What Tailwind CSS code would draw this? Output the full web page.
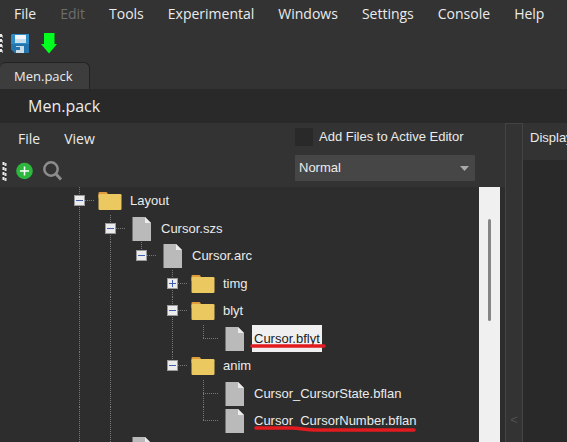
<!DOCTYPE html>
<html lang="en">
<head>
<meta charset="utf-8">
<meta name="viewport" content="width=device-width, initial-scale=1">
<title>Men.pack</title>
<script src="https://cdn.jsdelivr.net/npm/@tailwindcss/browser@4"></script>
</head>
<body class="h-screen overflow-hidden flex flex-col bg-[#333333] text-[#ebebeb] font-['Open_Sans','Noto_Sans',sans-serif] text-[14px] leading-5">

<svg class="hidden" aria-hidden="true">
  <defs>
    <g id="box"><rect x="10" y="8" width="11" height="11" fill="#9a9a9a"/><rect x="11" y="9" width="9" height="9" fill="#ececec"/><path d="M12 13.500h7" stroke="#3f5fae"/></g>
    <path id="up" d="M15.500 0v14" stroke="#777" stroke-dasharray="1 1"/>
    <path id="down" d="M15.500 14v14" stroke="#777" stroke-dasharray="1 1"/>
    <path id="side" d="M15 13.500h16" stroke="#777" stroke-dasharray="1 1"/>
    <symbol id="folder" viewBox="0 0 24 20"><path d="M0.500 3.500V2Q0.500 1 1.500 1H8q1 0 1.500 1l.8 2V7H.5z" fill="#e09c3c"/><rect x="0.500" y="3" width="23" height="16" rx="1.200" fill="#ecc860"/></symbol>
    <symbol id="file" viewBox="0 0 24 26"><path d="M3.500 1H16l6 6v18H3.500z" fill="#bababa"/><path d="M16 1l6 6h-6z" fill="#ececec"/></symbol>
  </defs>
</svg>

<nav class="flex h-7 shrink-0 items-center pl-[2px]">
  <button class="px-3">File</button>
  <button class="px-3 text-[#6d6d6d]" disabled>Edit</button>
  <button class="px-3">Tools</button>
  <button class="px-3">Experimental</button>
  <button class="px-3">Windows</button>
  <button class="px-3">Settings</button>
  <button class="px-3">Console</button>
  <button class="px-3">Help</button>
</nav>

<div class="flex h-[34px] shrink-0 items-start pt-1">
  <svg class="h-6 w-[11px]" viewBox="0 0 11 24"><path d="M1 2v19" stroke="#e8e8e8" stroke-width="2" stroke-dasharray="3 2"/><path d="M2.500 3v18" stroke="#999" stroke-dasharray="3 2"/></svg>
  <button aria-label="Save"><svg class="size-[22px]" viewBox="0 0 22 22"><path d="M1 2h17v19H4l-4-4V3z" fill="#2f8cc6"/><path d="M0 12h18v9H4l-4-4z" fill="#2474ae"/><path d="M4 3h11v4H4z" fill="#f2f6f8"/><path d="M4 7h11v4H4z" fill="#c8dfec"/><path d="M5 14h8v7H5z" fill="#c9dde9"/><path d="M5 15h4v3H5z" fill="#2474ae"/></svg></button>
  <button class="ml-2" aria-label="Download"><svg class="h-[22px] w-4" viewBox="0 0 16 22"><path d="M3 1h10.500v11H16l-8 9.500L0 12h3z" fill="#00ff1e"/></svg></button>
</div>

<div class="flex h-[27px] shrink-0">
  <button class="h-full rounded-t-md border-t border-r border-[#222] bg-[#3d3d3d] pr-4 pl-[14px] text-[13px]">Men.pack</button>
</div>

<h1 class="flex h-[34px] shrink-0 items-center bg-[#292929] pl-7 text-[16px] font-medium">Men.pack</h1>

<main class="flex min-h-0 grow font-['Liberation_Sans',Arial,sans-serif] text-[13px]">
  <section class="flex min-w-0 grow flex-col">
    <div class="flex h-16 shrink-0 justify-between">
      <div class="font-['Open_Sans','Noto_Sans',sans-serif] text-[14px]">
        <div class="flex h-8 items-center pl-[6px]"><button class="px-3">File</button><button class="px-3">View</button></div>
        <div class="flex h-8 items-center">
          <svg class="h-6 w-4" viewBox="0 0 16 24"><path d="M3.500 3v19" stroke="#eee" stroke-width="2" stroke-dasharray="3 2"/><path d="M5.500 4v18" stroke="#ddd" stroke-width="2" stroke-dasharray="3 2"/></svg>
          <button aria-label="Add"><svg class="size-[18px]" viewBox="0 0 18 18"><circle cx="8.500" cy="9" r="8.300" fill="#2db83d"/><path d="M8.500 4.500v9M4 9h9" stroke="#fff" stroke-width="1.500"/></svg></button>
          <button class="ml-[9px]" aria-label="Search"><svg class="size-5" viewBox="0 0 20 20" fill="none" stroke="#8c8c8c" stroke-width="2.500"><circle cx="8" cy="8" r="6.700"/><path d="M13 13l5 5.500" stroke-width="3"/></svg></button>
        </div>
      </div>
      <div class="mr-[30px] w-[180px]">
        <label class="flex h-8 items-center gap-[6px] whitespace-nowrap pb-1"><input type="checkbox" class="size-[18px] appearance-none bg-[#292929]">Add Files to Active Editor</label>
        <div class="relative">
          <select aria-label="Mode" class="h-[26px] w-full appearance-none bg-[#464646] pl-1"><option>Normal</option></select>
          <svg class="pointer-events-none absolute top-[11px] right-[6px] h-[5px] w-[9px]" viewBox="0 0 9 5"><path d="M0 0h9L4.500 5z" fill="#aaa"/></svg>
        </div>
      </div>
    </div>
    <div class="flex min-h-0 grow bg-[#2d2d2d]">
      <ul class="min-w-0 grow overflow-hidden pl-16 *:flex *:items-center *:odd:h-7 *:even:h-[27px]">
        <li><svg class="h-7 w-[31px]"><use href="#up"/><use href="#down"/><use href="#side"/><use href="#box"/></svg><svg class="ml-[3px] mr-2 h-5 w-6"><use href="#folder"/></svg>Layout</li>
        <li><svg class="h-7 w-[31px]"><use href="#up"/><use href="#down"/></svg><svg class="h-7 w-[31px]"><use href="#up"/><use href="#down"/><use href="#side"/><use href="#box"/></svg><svg class="ml-[3px] mr-2 h-[26px] w-6"><use href="#file"/></svg>Cursor.szs</li>
        <li><svg class="h-7 w-[31px]"><use href="#up"/><use href="#down"/></svg><svg class="h-7 w-[31px]"><use href="#up"/><use href="#down"/></svg><svg class="h-7 w-[31px]"><use href="#up"/><use href="#side"/><use href="#box"/></svg><svg class="ml-[3px] mr-2 h-[26px] w-6"><use href="#file"/></svg>Cursor.arc</li>
        <li><svg class="h-7 w-[31px]"><use href="#up"/><use href="#down"/></svg><svg class="h-7 w-[62px]"><use href="#up"/><use href="#down"/></svg><svg class="h-7 w-[31px]"><use href="#up"/><use href="#down"/><use href="#side"/><use href="#box"/><path d="M15.500 10v7" stroke="#3f5fae"/></svg><svg class="ml-[3px] mr-2 h-5 w-6"><use href="#folder"/></svg>timg</li>
        <li><svg class="h-7 w-[31px]"><use href="#up"/><use href="#down"/></svg><svg class="h-7 w-[62px]"><use href="#up"/><use href="#down"/></svg><svg class="h-7 w-[31px]"><use href="#up"/><use href="#down"/><use href="#side"/><use href="#box"/></svg><svg class="ml-[3px] mr-2 h-5 w-6"><use href="#folder"/></svg>blyt</li>
        <li><svg class="h-7 w-[31px]"><use href="#up"/><use href="#down"/></svg><svg class="h-7 w-[62px]"><use href="#up"/><use href="#down"/></svg><svg class="h-7 w-[31px]"><use href="#up"/><use href="#down"/></svg><svg class="h-7 w-[31px]"><use href="#up"/><use href="#side"/></svg><svg class="ml-[3px] mr-[6px] h-[26px] w-6"><use href="#file"/></svg><span class="relative flex h-full items-center bg-[#f0f0f0] px-[2px] text-[#1c1c1c]">Cursor.bflyt<svg class="absolute top-[18px] -left-[2px] h-[6px] w-[76px]" viewBox="0 0 76 6"><path d="M2 3h72" stroke="#e31b1f" stroke-width="3.500" stroke-linecap="round"/></svg></span></li>
        <li><svg class="h-7 w-[31px]"><use href="#up"/><use href="#down"/></svg><svg class="h-7 w-[62px]"><use href="#up"/><use href="#down"/></svg><svg class="h-7 w-[31px]"><use href="#up"/><use href="#side"/><use href="#box"/></svg><svg class="ml-[3px] mr-2 h-5 w-6"><use href="#folder"/></svg>anim</li>
        <li><svg class="h-7 w-[31px]"><use href="#up"/><use href="#down"/></svg><svg class="h-7 w-[93px]"><use href="#up"/><use href="#down"/></svg><svg class="h-7 w-[31px]"><use href="#up"/><use href="#down"/><use href="#side"/></svg><svg class="ml-[3px] mr-2 h-[26px] w-6"><use href="#file"/></svg>Cursor_CursorState.bflan</li>
        <li><svg class="h-7 w-[31px]"><use href="#up"/><use href="#down"/></svg><svg class="h-7 w-[93px]"><use href="#up"/><use href="#down"/></svg><svg class="h-7 w-[31px]"><use href="#up"/><use href="#side"/></svg><svg class="ml-[3px] mr-2 h-[26px] w-6"><use href="#file"/></svg><span class="relative">Cursor_CursorNumber.bflan<svg class="absolute top-[14px] left-0 h-2 w-[162px]" viewBox="0 0 162 8"><path d="M2 3H38C46 3 52 5 62 5H160" fill="none" stroke="#e31b1f" stroke-width="3.500" stroke-linecap="round"/></svg></span></li>
        <li><svg class="h-7 w-[31px]"><use href="#up"/><use href="#down"/></svg><svg class="h-7 w-[31px]"><use href="#up"/><use href="#side"/><use href="#box"/></svg><svg class="ml-[3px] mr-2 h-[26px] w-6"><use href="#file"/></svg><span class="pb-1">GearW</span></li>
      </ul>
      <div class="mr-[5px] w-[21px] shrink-0 bg-[#f0f0f0] pt-8"><div class="mx-auto h-[102px] w-[3px] rounded bg-[#858585]"></div></div>
    </div>
  </section>
  <div class="flex w-[18px] shrink-0 items-end justify-center border-x border-t border-[#444] pb-3 text-[#505050]">&lt;</div>
  <section class="flex w-[44px] shrink-0 flex-col overflow-hidden">
    <div class="h-[37px] shrink-0 pt-[5px] pl-[7px]">Display</div>
    <div class="grow bg-[#292929]"></div>
  </section>
</main>
</body>
</html>
